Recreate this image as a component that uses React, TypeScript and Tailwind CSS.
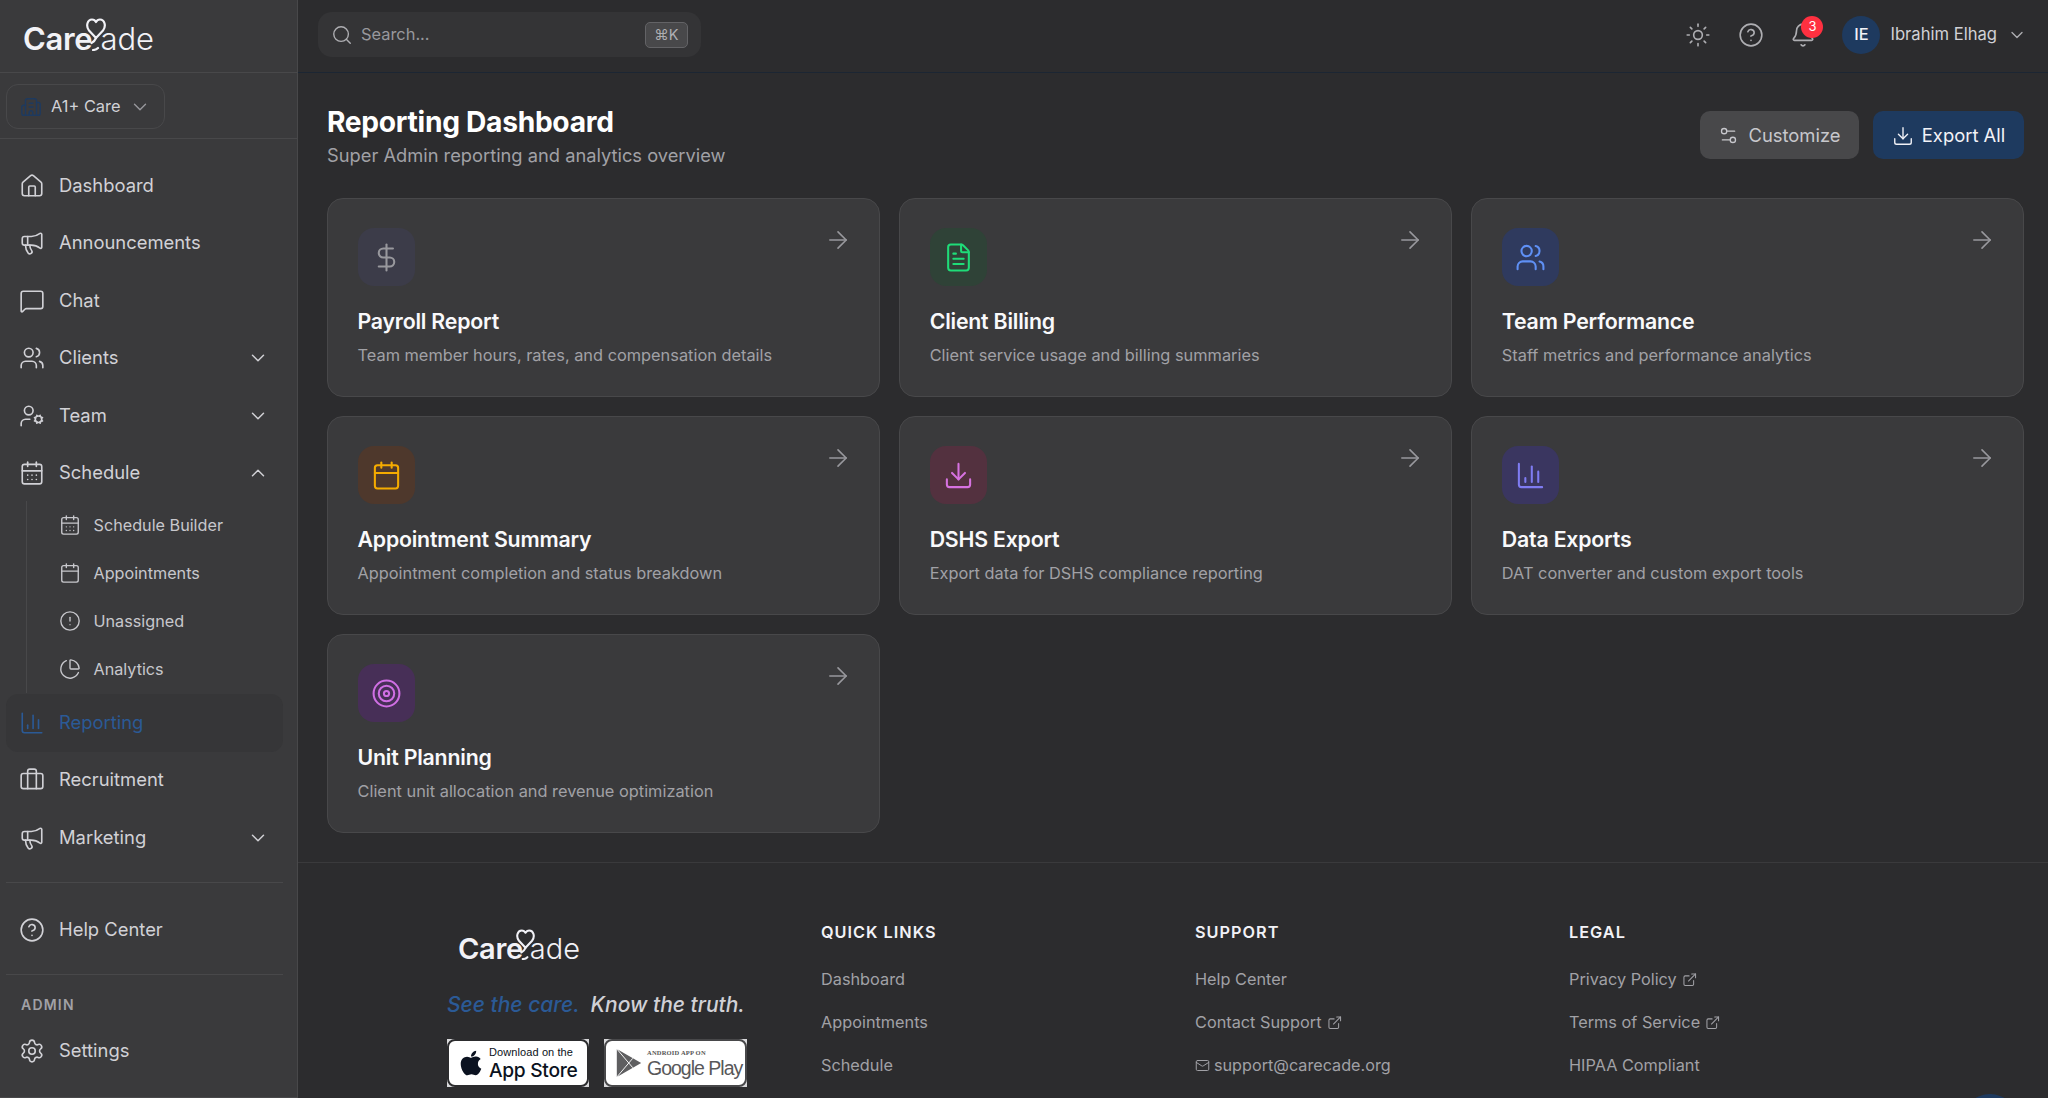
import {
  ArrowRight, Bell, Briefcase, Building2, Calendar, CalendarDays, ChartColumn, ChartPie, ChevronDown, ChevronUp,
  CircleAlert, CircleHelp, DollarSign, Download, ExternalLink, FileText, House, Mail, Megaphone, MessageSquare,
  Search, Settings, Settings2, Sun, Target, UserCog, Users,
} from "lucide-react";
import { FaApple } from "react-icons/fa";

const cards = [
  { title: "Payroll Report", desc: "Team member hours, rates, and compensation details", Icon: DollarSign, tile: "bg-[#3c3c49]", color: "text-[#98989d]" },
  { title: "Client Billing", desc: "Client service usage and billing summaries", Icon: FileText, tile: "bg-[#2f4237]", color: "text-[#1fdc78]" },
  { title: "Team Performance", desc: "Staff metrics and performance analytics", Icon: Users, tile: "bg-[#2f3a5e]", color: "text-[#5f90f5]" },
  { title: "Appointment Summary", desc: "Appointment completion and status breakdown", Icon: Calendar, tile: "bg-[#4e382c]", color: "text-[#f5ab00]" },
  { title: "DSHS Export", desc: "Export data for DSHS compliance reporting", Icon: Download, tile: "bg-[#53313f]", color: "text-[#d672e0]" },
  { title: "Data Exports", desc: "DAT converter and custom export tools", Icon: ChartColumn, tile: "bg-[#3a3660]", color: "text-[#7f7cf2]" },
  { title: "Unit Planning", desc: "Client unit allocation and revenue optimization", Icon: Target, tile: "bg-[#472f57]", color: "text-[#d06fe4]" },
];

function Logo({ size }: { size: "lg" | "md" }) {
  const lg = size === "lg";
  return (
    <div className={`relative flex items-baseline text-[#f2f2f7] ${lg ? "text-[31px] leading-[40px]" : "text-[29px] leading-[37px]"}`}>
      <span className="font-semibold tracking-[-0.3px]">Care</span>
      <span className={`font-light ${lg ? "ml-[8px]" : "ml-[7px]"}`}>ade</span>
      <svg
        viewBox="0 0 20 33"
        fill="none"
        stroke="#f2f2f7"
        strokeWidth="2.2"
        strokeLinecap="round"
        strokeLinejoin="round"
        className={`absolute ${lg ? "left-[63px] -top-[1px] w-[20px] h-[33px]" : "left-[58px] -top-[1px] w-[19px] h-[31px]"}`}
      >
        <path d="M10 20 L3 12.5 C-0.5 8 1.5 1.5 6 1.5 C8 1.5 9.3 2.6 10 4 C10.7 2.6 12 1.5 14 1.5 C18.5 1.5 20.5 8 17 12.5 Z" />
        <path d="M10 20 C9 22.5 7.5 24 5.5 25" />
        <path d="M12 30 C10.5 31.5 9 32 7 32" />
      </svg>
    </div>
  );
}

function NavItem({ label, Icon, chevron, active }: { label: string; Icon: typeof House; chevron?: "up" | "down"; active?: boolean }) {
  return (
    <div className={`flex items-center h-[57.5px] pl-[13px] pr-[14px] rounded-[12px] ${active ? "bg-[#363638] text-[#2b5a96]" : "text-[#d1d1d6]"}`}>
      <Icon className="w-[26px] h-[26px] shrink-0" strokeWidth={1.5} />
      <span className="ml-[14px] text-[18.4px] flex-1">{label}</span>
      {chevron === "down" && <ChevronDown className="w-[22px] h-[22px]" strokeWidth={1.6} />}
      {chevron === "up" && <ChevronUp className="w-[22px] h-[22px]" strokeWidth={1.6} />}
    </div>
  );
}

function SubItem({ label, Icon }: { label: string; Icon: typeof House }) {
  return (
    <div className="flex items-center h-[48px] pl-[52px] text-[#c7c7cc]">
      <Icon className="w-[22px] h-[22px] shrink-0" strokeWidth={1.5} />
      <span className="ml-[13px] text-[16.2px]">{label}</span>
    </div>
  );
}

function Sidebar() {
  return (
    <aside className="w-[298px] shrink-0 h-full bg-[#3a3a3c] border-r border-b border-[#48484a] flex flex-col">
      <div className="h-[73px] shrink-0 border-b border-[#48484a] pl-[23px] pt-[19px]">
        <Logo size="lg" />
      </div>
      <div className="h-[66px] shrink-0 border-b border-[#48484a] pt-[11px] pl-[6px]">
        <div className="w-[159px] h-[45px] rounded-[12px] border border-[#48484a] flex items-center pl-[13px]">
          <Building2 className="w-[22px] h-[22px] text-[#1e3a5f]" strokeWidth={1.6} />
          <span className="ml-[9px] text-[16.4px] text-[#d1d1d6]">A1+ Care</span>
          <ChevronDown className="ml-[8px] w-[22px] h-[22px] text-[#98989d]" strokeWidth={1.5} />
        </div>
      </div>
      <nav className="flex-1 pl-[6px] pr-[14px] pt-[18px]">
        <NavItem label="Dashboard" Icon={House} />
        <NavItem label="Announcements" Icon={Megaphone} />
        <NavItem label="Chat" Icon={MessageSquare} />
        <NavItem label="Clients" Icon={Users} chevron="down" />
        <NavItem label="Team" Icon={UserCog} chevron="down" />
        <NavItem label="Schedule" Icon={CalendarDays} chevron="up" />
        <div className="h-[192px] -mt-[1px] mb-[1px] border-l border-[#48484a] ml-[19.5px]">
          <div className="-ml-[20px]">
            <SubItem label="Schedule Builder" Icon={CalendarDays} />
            <SubItem label="Appointments" Icon={Calendar} />
            <SubItem label="Unassigned" Icon={CircleAlert} />
            <SubItem label="Analytics" Icon={ChartPie} />
          </div>
        </div>
        <NavItem label="Reporting" Icon={ChartColumn} active />
        <NavItem label="Recruitment" Icon={Briefcase} />
        <NavItem label="Marketing" Icon={Megaphone} chevron="down" />
        <div className="mt-[15px] mb-[19px] border-t border-[#48484a]" />
        <NavItem label="Help Center" Icon={CircleHelp} />
        <div className="mt-[15px] border-t border-[#48484a]" />
        <div className="mt-[21px] pl-[15px] text-[14px] leading-[18px] font-semibold tracking-[1.2px] text-[#a1a1a6]">ADMIN</div>
        <div className="mt-[8px]">
          <NavItem label="Settings" Icon={Settings} />
        </div>
      </nav>
    </aside>
  );
}

function Header() {
  return (
    <header className="h-[73px] shrink-0 border-b border-[#1c2633] flex items-center pl-[20px] pr-[21px] pb-[3px]">
      <div className="w-[383px] h-[45px] rounded-[14px] bg-[#343436] flex items-center pl-[13px] pr-[13px]">
        <Search className="w-[22px] h-[22px] text-[#aeaeb2]" strokeWidth={1.5} />
        <span className="ml-[8px] flex-1 text-[16.4px] text-[#98989d]">Search...</span>
        <span className="w-[43px] h-[26px] rounded-[5px] bg-[#48484a] border border-[#636366] flex items-center justify-center text-[14.5px] text-[#aeaeb2]">⌘K</span>
      </div>
      <div className="flex-1" />
      <Sun className="w-[26px] h-[26px] text-[#aeaeb2]" strokeWidth={1.5} />
      <CircleHelp className="ml-[27px] w-[26px] h-[26px] text-[#aeaeb2]" strokeWidth={1.5} />
      <div className="relative ml-[26px] w-[26px] h-[26px]">
        <Bell className="w-[26px] h-[26px] text-[#aeaeb2]" strokeWidth={1.5} />
        <span className="absolute -top-[6px] left-[11px] w-[22px] h-[22px] rounded-full bg-[#ff3040] text-white text-[13px] flex items-center justify-center">3</span>
      </div>
      <div className="ml-[26px] w-[38px] h-[38px] rounded-full bg-[#1e3a5f] text-[#f2f2f7] text-[16.4px] font-medium flex items-center justify-center">IE</div>
      <span className="ml-[10px] text-[16.6px] text-[#d1d1d6]">Ibrahim Elhag</span>
      <ChevronDown className="ml-[10px] w-[20px] h-[20px] text-[#aeaeb2]" strokeWidth={1.6} />
    </header>
  );
}

function Card({ title, desc, Icon, tile, color }: (typeof cards)[number]) {
  return (
    <div className="h-[199px] rounded-[16px] bg-[#3a3a3c] border border-[#48484a] pl-[29.5px] pr-[27px] pt-[29px]">
      <div className="flex justify-between">
        <div className={`w-[57px] h-[58px] rounded-[16px] flex items-center justify-center ${tile}`}>
          <Icon className={`w-[31px] h-[31px] ${color}`} strokeWidth={1.6} />
        </div>
        <ArrowRight className="w-[28px] h-[28px] text-[#98989d] -mt-[2px]" strokeWidth={1.4} />
      </div>
      <div className="mt-[20px] text-[21.3px] leading-[30px] font-semibold text-[#f9f9fb] tracking-[-0.2px]">{title}</div>
      <div className="mt-[6px] text-[16.35px] leading-[26px] text-[#a1a1a6]">{desc}</div>
    </div>
  );
}

function FooterLink({ children, ext }: { children: string; ext?: boolean }) {
  return (
    <div className="h-[43px] flex items-center text-[16.3px] text-[#a1a1a6]">
      {children}
      {ext && <ExternalLink className="ml-[5px] w-[15.5px] h-[15.5px]" strokeWidth={1.6} />}
    </div>
  );
}

function FooterCol({ title, children }: { title: string; children: React.ReactNode }) {
  return (
    <div className="w-[374px]">
      <div className="text-[16.3px] leading-[20px] font-semibold tracking-[1px] text-[#f2f2f7] mb-[16px]">{title}</div>
      {children}
    </div>
  );
}

function Badges() {
  return (
    <div className="flex gap-[15px] mt-[20px]">
      <div className="w-[142px] h-[48px] bg-[#d8d8da]">
        <div className="w-full h-full bg-white rounded-[8px] border-2 border-[#2c2c2e] flex items-center pl-[9px] text-[#0b1220]">
          <FaApple className="w-[26px] h-[28px] shrink-0" />
          <div className="ml-[5px] whitespace-nowrap">
            <div className="text-[11px] leading-[13px] font-['Liberation_Sans',sans-serif] tracking-[0.1px]">Download on the</div>
            <div className="text-[19.2px] leading-[22px] font-medium tracking-[-0.3px]">App Store</div>
          </div>
        </div>
      </div>
      <div className="w-[143px] h-[48px] bg-[#d8d8da]">
        <div className="w-full h-full bg-white rounded-[8px] border-2 border-[#48484a] flex items-center pl-[9px] text-[#58585a]">
          <svg viewBox="0 0 28 32" className="w-[28px] h-[30px] shrink-0">
            <path d="M1 1 L27 16 L1 31 Z" fill="#5e5e60" />
            <path d="M1 1 L18 21 M1 31 L18 11" stroke="#fff" strokeWidth="1" />
          </svg>
          <div className="ml-[4px] whitespace-nowrap">
            <div className="text-[6.5px] leading-[9px] font-semibold text-[#555] font-['Liberation_Serif',serif] tracking-[0.2px]">ANDROID APP ON</div>
            <div className="text-[19.5px] leading-[22px] font-['Liberation_Sans',sans-serif] tracking-[-1px]">Google Play</div>
          </div>
        </div>
      </div>
    </div>
  );
}

export default function App() {
  return (
    <div className="relative flex h-[1098px] w-[2048px] overflow-hidden bg-[#2c2c2e] font-['Inter',sans-serif]">
      <Sidebar />
      <div className="flex-1 h-full flex flex-col overflow-hidden">
        <Header />
        <main className="pl-[29px] pr-[24px] shrink-0">
          <div className="flex justify-between h-[125px] pt-[31px]">
            <div>
              <h1 className="text-[28.2px] leading-[36px] font-bold text-white tracking-[-0.3px]">Reporting Dashboard</h1>
              <p className="mt-[2px] text-[18.3px] leading-[26px] text-[#a1a1a6]">Super Admin reporting and analytics overview</p>
            </div>
            <div className="flex gap-[14px] mt-[7px]">
              <div className="w-[159px] h-[48px] pt-[1px] rounded-[10px] bg-[#48484a] text-[#c7c7cc] flex items-center justify-center text-[18.4px]">
                <Settings2 className="w-[21px] h-[21px] mr-[9px]" strokeWidth={1.5} />
                Customize
              </div>
              <div className="w-[151px] h-[48px] pt-[1px] rounded-[10px] bg-[#1e3a5f] text-[#f2f2f7] flex items-center justify-center text-[18.4px]">
                <Download className="w-[22px] h-[22px] mr-[8px]" strokeWidth={1.5} />
                Export All
              </div>
            </div>
          </div>
          <div className="grid grid-cols-3 gap-x-[19.5px] gap-y-[19px]">
            {cards.map((c) => <Card key={c.title} {...c} />)}
          </div>
        </main>
        <footer className="mt-[29px] border-t border-[#3a3a3c] flex shrink-0 pt-[59px]">
          <div className="ml-[149px] w-[374px]">
            <div className="ml-[11px] mt-[8px]"><Logo size="md" /></div>
            <div className="mt-[24px] text-[21px] leading-[28px] font-medium italic">
              <span className="text-[#2b5a96]">See the care.</span>
              <span className="ml-[11px] text-[#d1d1d6]">Know the truth.</span>
            </div>
            <Badges />
          </div>
          <FooterCol title="QUICK LINKS">
            <FooterLink>Dashboard</FooterLink>
            <FooterLink>Appointments</FooterLink>
            <FooterLink>Schedule</FooterLink>
          </FooterCol>
          <FooterCol title="SUPPORT">
            <FooterLink>Help Center</FooterLink>
            <FooterLink ext>Contact Support</FooterLink>
            <div className="h-[43px] flex items-center text-[16.2px] text-[#a1a1a6]">
              <Mail className="w-[15px] h-[15px] mr-[4px]" strokeWidth={1.6} />
              support@carecade.org
            </div>
          </FooterCol>
          <FooterCol title="LEGAL">
            <FooterLink ext>Privacy Policy</FooterLink>
            <FooterLink ext>Terms of Service</FooterLink>
            <FooterLink>HIPAA Compliant</FooterLink>
          </FooterCol>
        </footer>
      </div>
      <div className="absolute left-[1962px] top-[1094px] w-[56px] h-[56px] rounded-full bg-[#1e3a5f]" />
    </div>
  );
}
